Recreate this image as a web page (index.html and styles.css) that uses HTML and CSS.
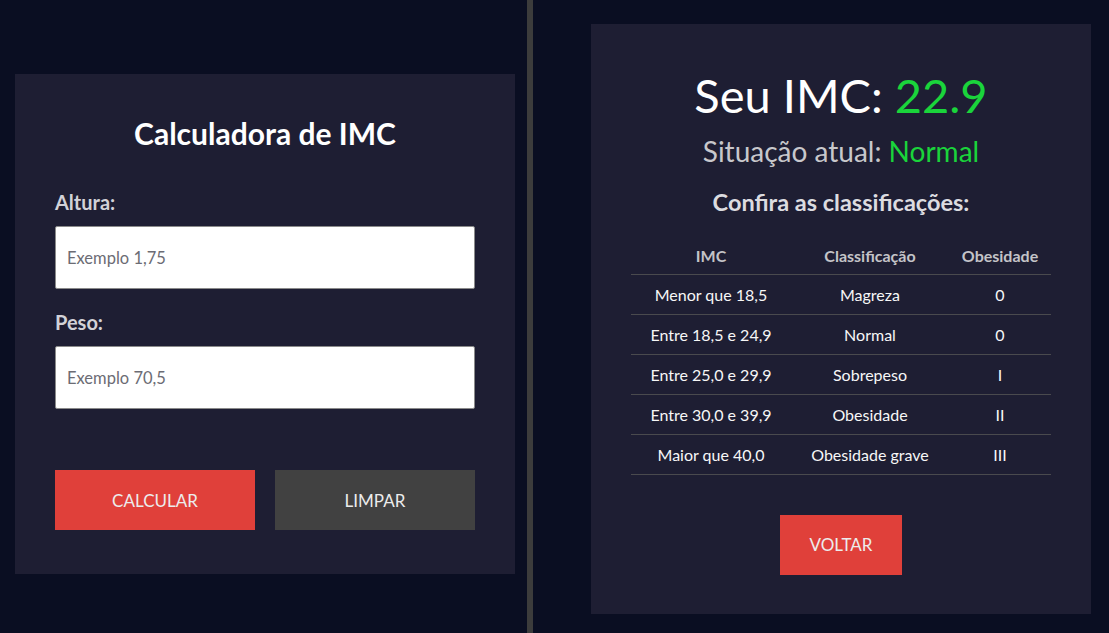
FILE: index.html
```html
<!DOCTYPE html>
<html lang="pt-BR">
<head>
<meta charset="utf-8">
<title>Calculadora de IMC</title>
<link rel="stylesheet" href="styles.css">
</head>
<body>
<main class="page">
  <section class="pane pane-left">
    <form class="card calc">
      <h1 class="calc-title">Calculadora de IMC</h1>
      <label class="field-label" for="altura">Altura:</label>
      <input class="field-input" id="altura" type="text" placeholder="Exemplo 1,75">
      <label class="field-label" for="peso">Peso:</label>
      <input class="field-input" id="peso" type="text" placeholder="Exemplo 70,5">
      <div class="btn-row">
        <button type="button" class="btn btn-red">CALCULAR</button>
        <button type="button" class="btn btn-gray">LIMPAR</button>
      </div>
    </form>
  </section>
  <div class="divider"></div>
  <section class="pane pane-right">
    <div class="card result">
      <h2 class="result-title">Seu IMC: <span class="green">22.9</span></h2>
      <p class="result-status">Situação atual: <span class="green">Normal</span></p>
      <h3 class="result-sub">Confira as classificações:</h3>
      <table class="table">
        <thead>
          <tr><th class="c1">IMC</th><th class="c2">Classificação</th><th class="c3">Obesidade</th></tr>
        </thead>
        <tbody>
          <tr><td>Menor que 18,5</td><td>Magreza</td><td>0</td></tr>
          <tr><td>Entre 18,5 e 24,9</td><td>Normal</td><td>0</td></tr>
          <tr><td>Entre 25,0 e 29,9</td><td>Sobrepeso</td><td>I</td></tr>
          <tr><td>Entre 30,0 e 39,9</td><td>Obesidade</td><td>II</td></tr>
          <tr><td>Maior que 40,0</td><td>Obesidade grave</td><td>III</td></tr>
        </tbody>
      </table>
      <div class="back-row">
        <button type="button" class="btn btn-red btn-back">VOLTAR</button>
      </div>
    </div>
  </section>
</main>
</body>
</html>
```

FILE: styles.css
```css
* { box-sizing: border-box; }

html, body {
  margin: 0;
  padding: 0;
  background: #0a0e22;
  font-family: Lato, "Open Sans", Arial, sans-serif;
  color: #ffffff;
}

.page {
  display: flex;
  height: 633px;
  overflow: hidden;
}

.pane-left {
  width: 527px;
  padding: 74px 0 0 15px;
}

.divider {
  width: 6px;
  background: #3c3c3c;
}

.pane-right {
  flex: 1;
  padding: 24px 0 0 58px;
}

.card {
  width: 500px;
  background: #1e1e33;
}

.calc {
  height: 500px;
  padding: 40px 40px 0 40px;
  display: flex;
  flex-direction: column;
}

.calc-title {
  margin: 0 0 38px 0;
  text-align: center;
  font-size: 30px;
  line-height: 38px;
  font-weight: 700;
  color: #ffffff;
}

.field-label {
  font-size: 20px;
  line-height: 24px;
  font-weight: 700;
  color: #d2d2d8;
  margin-bottom: 12px;
}

.field-input {
  width: 420px;
  height: 63px;
  flex: none;
  border: 1px solid #8a8a8a;
  border-radius: 2px;
  background: #ffffff;
  padding: 0 11px;
  font-family: Lato, Arial, sans-serif;
  font-size: 16.5px;
  color: #333;
  outline: none;
  margin-bottom: 21px;
}

.field-input::placeholder {
  color: #6c6c74;
}

.btn-row {
  display: flex;
  gap: 20px;
  margin-top: 40px;
}

.btn {
  border: none;
  font-family: Lato, Arial, sans-serif;
  font-size: 17px;
  color: #ececec;
  height: 60px;
  cursor: pointer;
}

.btn-row .btn {
  width: 200px;
}

.btn-red { background: #e0403a; }
.btn-gray { background: #414141; }

.result {
  height: 590px;
  padding: 40px 40px 0 40px;
  text-align: center;
}

.result-title {
  margin: 0;
  font-size: 47px;
  line-height: 62px;
  font-weight: 400;
  color: #ffffff;
}

.green { color: #1ad43b; }

.result-status {
  margin: 1px 0 0 0;
  font-size: 28px;
  line-height: 48px;
  color: #c8c8cc;
}

.result-sub {
  margin: 12px 0 0 0;
  font-size: 23.5px;
  line-height: 30px;
  font-weight: 700;
  color: #dcdce0;
}

.table {
  width: 420px;
  margin: 20px 0 0 0;
  border-collapse: collapse;
}

.table th {
  font-size: 16px;
  font-weight: 700;
  color: #c4c4c8;
  height: 37px;
  border-bottom: 1px solid #4a4a4e;
}

.table td {
  font-size: 16px;
  color: #f7f7f7;
  height: 40px;
  border-bottom: 1px solid #4a4a4e;
}

.c1 { width: 160px; }
.c2 { width: 158px; }
.c3 { width: 102px; }

.back-row {
  margin-top: 40px;
}

.btn-back {
  padding: 0 30px;
}
```
